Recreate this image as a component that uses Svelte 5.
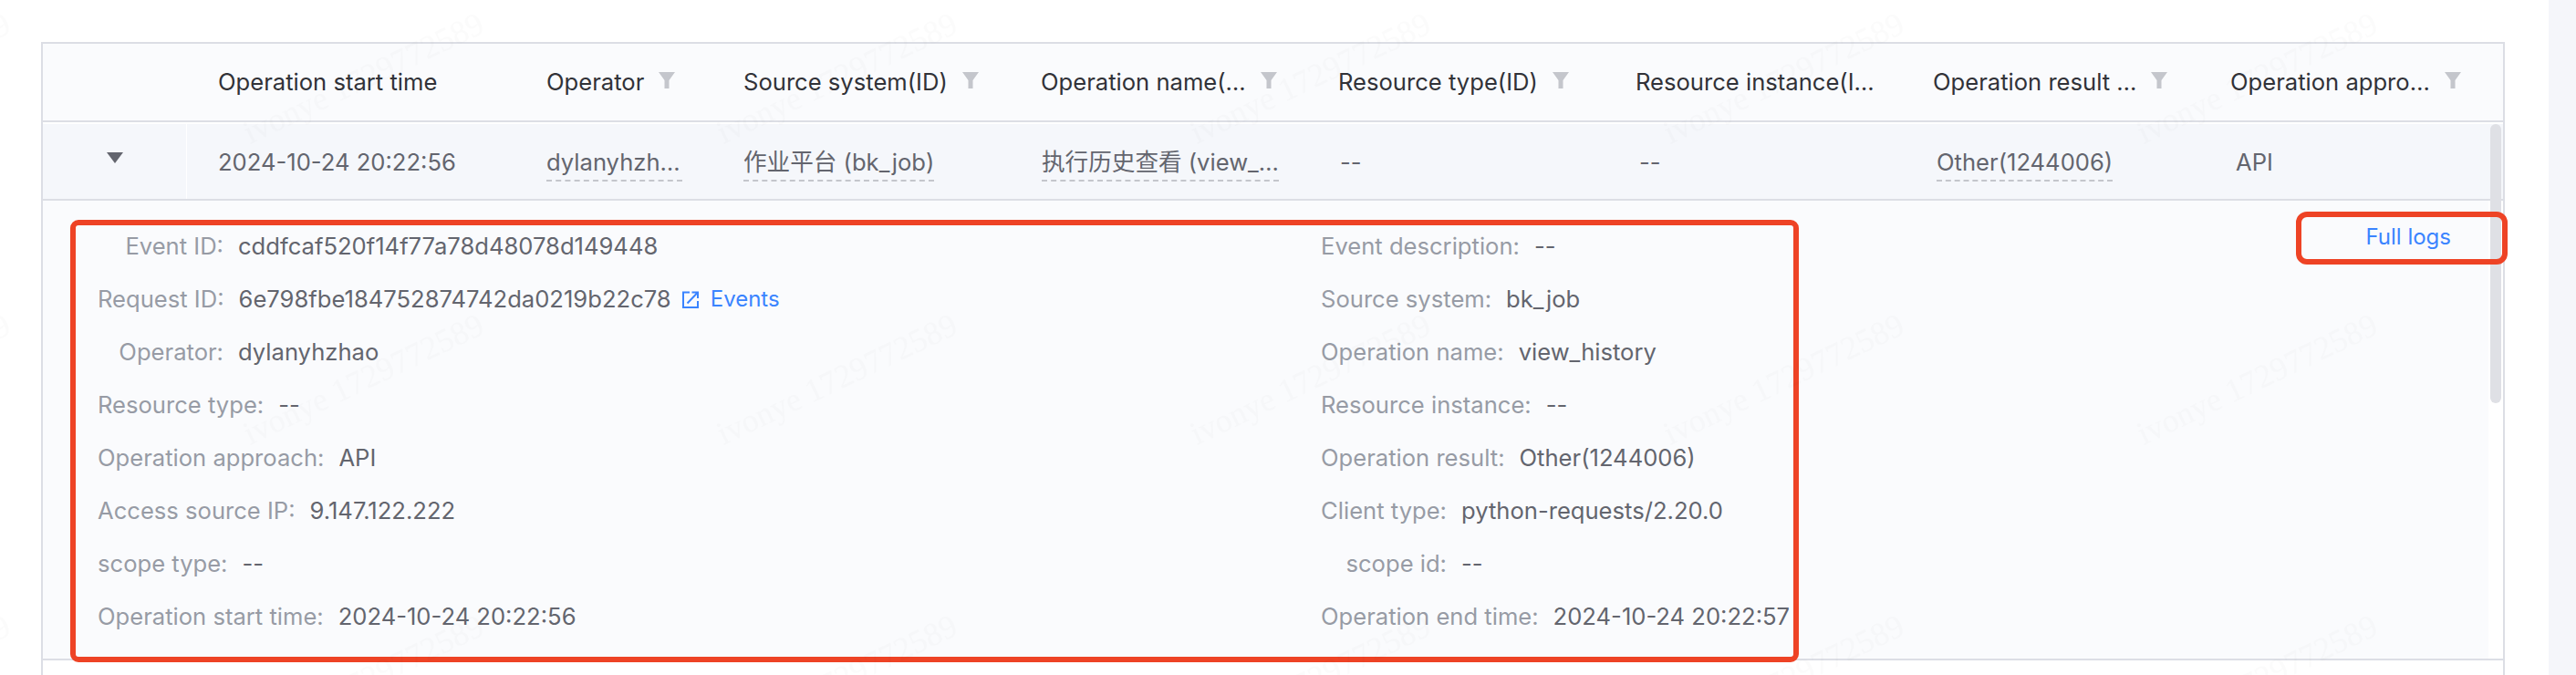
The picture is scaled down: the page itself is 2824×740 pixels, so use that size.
<script>
  const columns = [
    { label: "Operation start time" },
    { label: "Operator", filter: true },
    { label: "Source system(ID)", filter: true },
    { label: "Operation name(…", filter: true },
    { label: "Resource type(ID)", filter: true },
    { label: "Resource instance(I…" },
    { label: "Operation result …", filter: true },
    { label: "Operation appro…", filter: true },
  ];

  const cells = [
    { text: "2024-10-24 20:22:56" },
    { text: "dylanyhzh…", tip: true, fill: true },
    { text: "作业平台 (bk_job)", tip: true },
    { text: "执行历史查看 (view_…", tip: true, fill: true },
    { text: "--" },
    { text: "--" },
    { text: "Other(1244006)", tip: true },
    { text: "API" },
  ];

  const details = [
    ["Event ID", "cddfcaf520f14f77a78d48078d149448"],
    ["Event description", "--"],
    ["Request ID", "6e798fbe184752874742da0219b22c78", true],
    ["Source system", "bk_job"],
    ["Operator", "dylanyhzhao"],
    ["Operation name", "view_history"],
    ["Resource type", "--"],
    ["Resource instance", "--"],
    ["Operation approach", "API"],
    ["Operation result", "Other(1244006)"],
    ["Access source IP", "9.147.122.222"],
    ["Client type", "python-requests/2.20.0"],
    ["scope type", "--"],
    ["scope id", "--"],
    ["Operation start time", "2024-10-24 20:22:56"],
    ["Operation end time", "2024-10-24 20:22:57"],
  ];
</script>

<div class="page">
  <main class="content">
    <div class="table">
      <div class="head">
        <div class="head-cell"></div>
        {#each columns as col}
          <div class="head-cell">
            <span class="head-label">{col.label}</span>
            {#if col.filter}
              <svg class="funnel" viewBox="0 0 18 18" width="18" height="18">
                <path d="M0 0H18L11.500 9V18H6.500V9Z" fill="#c4c6cc" />
              </svg>
            {/if}
          </div>
        {/each}
      </div>

      <div class="body">
        <div class="row">
          <div class="cell expand">
            <svg viewBox="0 0 18 12" width="18" height="12">
              <path d="M0 0H18L9 12Z" fill="#63656e" />
            </svg>
          </div>
          {#each cells as cell}
            <div class="cell">
              <span class:tip={cell.tip} class:fill={cell.fill} class="cell-text">{cell.text}</span>
            </div>
          {/each}
        </div>

        <div class="expanded">
          <div class="panel">
            <div class="detail-grid">
              {#each details as [label, value, link]}
                <div class="item">
                  <span class="item-label">{label}:</span>
                  <span class="item-value">{value}</span>
                  {#if link}
                    <a class="events" href="#events">
                      <svg viewBox="0 0 18 19" width="18" height="19" fill="none" stroke="#3a84ff" stroke-width="2">
                        <path d="M8 1.500H1V18H17V11" />
                        <path d="M5.500 13.500L16.500 2M10.500 1.500H17V8" />
                      </svg>
                      Events
                    </a>
                  {/if}
                </div>
              {/each}
            </div>
            <a class="full-logs" href="#logs">Full logs</a>
          </div>
        </div>

        <div class="scrollbar"></div>
        <div class="mark mark-details"></div>
        <div class="mark mark-logs"></div>
      </div>
    </div>
  </main>
  <aside class="rail"></aside>

  <svg class="watermark" width="2824" height="740">
    <defs>
      <pattern id="wm" patternUnits="userSpaceOnUse" x="264" y="-10" width="519" height="330">
        <text x="10" y="168" transform="rotate(-25.500 10 168)">ivonye 1729772589</text>
      </pattern>
    </defs>
    <rect width="2824" height="740" fill="url(#wm)" />
  </svg>
</div>

<style>
  :global(body) {
    margin: 0;
    background: #fff;
  }
  .page {
    position: relative;
    display: flex;
    height: 740px;
    overflow: hidden;
    font-family: Inter, "Noto Sans CJK SC", sans-serif;
    font-size: 25.6px;
    line-height: 32px;
  }
  .content {
    width: 2794px;
    padding: 46px 0 0 45px;
    box-sizing: border-box;
  }
  .rail {
    flex: 1;
    background: #f5f6fa;
  }
  .table {
    width: 2701px;
    height: 694px;
    box-sizing: border-box;
    border: solid #dcdee5;
    border-width: 2px 2px 0;
  }
  .head {
    display: grid;
    grid-template-columns: 158px 360px 216px repeat(6, 326px);
    height: 84px;
    background: #fafbfd;
    border-bottom: 2px solid #dcdee5;
  }
  .head-cell {
    display: flex;
    align-items: center;
    gap: 16px;
    min-width: 0;
    padding: 0 0 0 34px;
    color: #313238;
  }
  .head-label {
    white-space: nowrap;
  }
  .funnel {
    flex: none;
    margin-top: -4px;
  }
  .body {
    position: relative;
  }
  .row {
    display: grid;
    grid-template-columns: 158px 360px 216px 327px 327px 328px 326px 328px 1fr;
    height: 86px;
    box-sizing: border-box;
    background: #f5f7fb;
    border-top: 2px solid #fff;
    border-bottom: 2px solid #dcdee5;
  }
  .cell {
    display: flex;
    align-items: center;
    min-width: 0;
    padding: 2px 33px 0 34px;
    color: #63656e;
  }
  .expand {
    justify-content: center;
    padding: 0;
    border-right: 1px solid #fff;
  }
  .expand svg {
    margin-top: -8px;
  }
  .cell-text {
    white-space: nowrap;
  }
  .tip {
    padding-bottom: 3px;
    margin-top: 5px;
    border-bottom: 2px dashed #c4c6cc;
  }
  .fill {
    flex: 1;
  }
  .expanded {
    height: 504px;
    box-sizing: border-box;
    border-bottom: 2px solid #dcdee5;
  }
  .panel {
    display: flex;
    justify-content: space-between;
    height: 100%;
    box-sizing: border-box;
    margin-right: 16px;
    padding: 21px 41px 0 60px;
    background: #fafbfd;
  }
  .detail-grid {
    display: grid;
    grid-template-columns: 1341px 530px;
    grid-auto-rows: 58px;
  }
  .item {
    display: flex;
    align-items: center;
    white-space: nowrap;
  }
  .item-label {
    min-width: 138px;
    margin-right: 16px;
    text-align: right;
    color: #979ba5;
  }
  .item-value {
    color: #63656e;
  }
  .events {
    display: flex;
    align-items: center;
    gap: 13px;
    margin-left: 12px;
    font-size: 24px;
    color: #3a84ff;
    text-decoration: none;
  }
  .full-logs {
    margin-top: 3px;
    align-self: flex-start;
    font-size: 24px;
    color: #3a84ff;
    text-decoration: none;
  }
  .scrollbar {
    position: absolute;
    top: 2px;
    right: 2px;
    width: 12px;
    height: 306px;
    border-radius: 6px;
    background: #dfe0e5;
  }
  .mark {
    position: absolute;
    box-sizing: border-box;
    border: 6px solid #ee4325;
    border-radius: 9px;
  }
  .mark-details {
    left: 30px;
    top: 107px;
    width: 1895px;
    height: 485px;
  }
  .mark-logs {
    left: 2470px;
    top: 98px;
    width: 232px;
    height: 58px;
    border-radius: 12px;
  }
  .watermark {
    position: absolute;
    inset: 0;
    pointer-events: none;
  }
  .watermark text {
    font-family: "Liberation Serif", serif;
    font-size: 36px;
    fill: rgba(0, 0, 0, 0.016);
  }
</style>
